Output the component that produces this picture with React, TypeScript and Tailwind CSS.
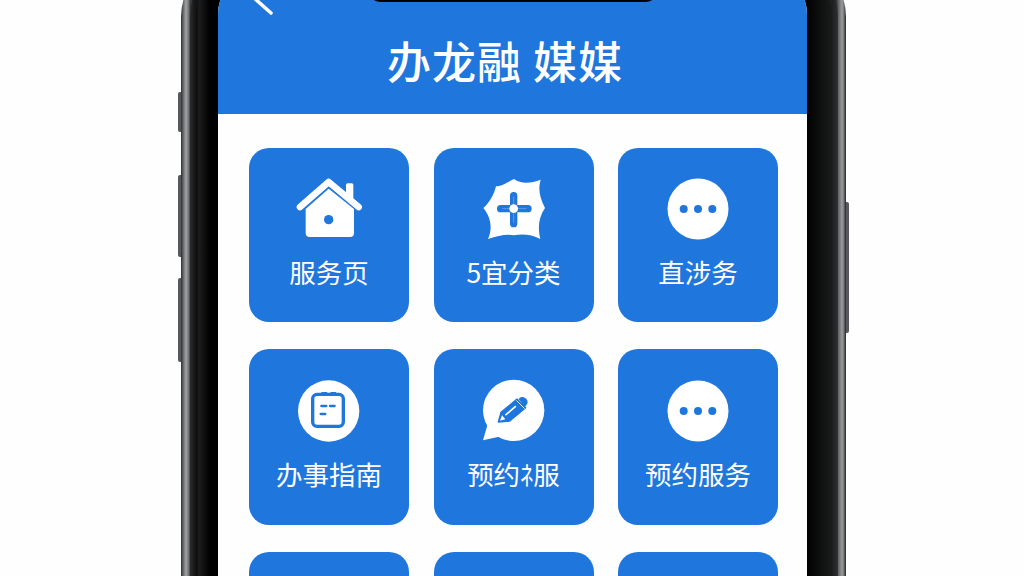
import React from "react";

const Dots = () => (
  <svg width="62" height="62" viewBox="0 0 62 62">
    <circle cx="31" cy="31" r="30.5" fill="#fff" />
    <circle cx="16.7" cy="31" r="4" fill="#1f76dc" />
    <circle cx="31" cy="31" r="4" fill="#1f76dc" />
    <circle cx="45.3" cy="31" r="4" fill="#1f76dc" />
  </svg>
);

const House = () => (
  <svg width="68" height="62" viewBox="165 115 204 186">
    <path d="M180 202L266 127L356 202" fill="none" stroke="#fff" strokeWidth="20" strokeLinecap="round" strokeLinejoin="round" />
    <path d="M318 160V136a5 5 0 0 1 5-5h12a5 5 0 0 1 5 5v50z" fill="#fff" />
    <path d="M197 208L266 147L342 208V280a12 12 0 0 1-12 12H209a12 12 0 0 1-12-12z" fill="#fff" />
    <circle cx="266" cy="240" r="14" fill="#1f76dc" />
  </svg>
);

const Blob = () => (
  <svg width="68" height="62" viewBox="720 115 204 186">
    <path d="M768 140C790 140 805 125 822 118C845 135 875 130 902 120C893 150 900 175 915 205C895 235 893 265 901 298C875 285 850 282 822 287C800 282 775 288 744 298C757 270 755 235 730 205C748 190 762 165 768 140Z" fill="#fff" />
    <path d="M821 168V252M782 207H864" stroke="#1f76dc" strokeWidth="22" strokeLinecap="round" />
    <path d="M821 172V248M788 207H858" stroke="#5d9ce6" strokeWidth="3" strokeLinecap="round" />
    <circle cx="821" cy="207" r="13" fill="#fff" />
  </svg>
);

const Calendar = () => (
  <svg width="62" height="62" viewBox="28 27 186 186">
    <circle cx="120" cy="120" r="92" fill="#fff" />
    <rect x="72" y="70" width="92" height="96" rx="13" fill="none" stroke="#1f76dc" strokeWidth="10" />
    <path d="M100 65H114M127 65H141" stroke="#1f76dc" strokeWidth="4" strokeLinecap="round" />
    <path d="M98 105H113M124 105H138M96 129H110" stroke="#1f76dc" strokeWidth="7" strokeLinecap="round" />
  </svg>
);

const Pencil = () => (
  <svg width="62" height="64" viewBox="28 24 186 192">
    <circle cx="120" cy="118" r="92" fill="#fff" />
    <path d="M42 160L28 208L86 195z" fill="#fff" />
    <path d="M74 153L82 124L130 84L156 110L108 150z" fill="#1f76dc" stroke="#1f76dc" strokeWidth="4" strokeLinejoin="round" />
    <path d="M135 84a13 13 0 0 1 18 -4a14 14 0 0 1 7 20l-7 8z" fill="#1f76dc" />
    <path d="M128 88L153 113" stroke="#fff" strokeWidth="2.5" />
    <path d="M97 131L125 107" stroke="#fff" strokeWidth="5" strokeLinecap="round" />
    <path d="M79 149L85 133L95 145z" fill="#fff" />
  </svg>
);

const cards = [
  { label: "服务页", icon: <House />, pad: "pt-[30px]" },
  { label: "5宜分类", icon: <Blob />, pad: "pt-[30px]" },
  { label: "直涉务", icon: <Dots />, pad: "pt-[30px]" },
  { label: "办事指南", icon: <Calendar />, pad: "pt-[31px]" },
  { label: "预约ﾈ服", icon: <Pencil />, pad: "pt-[31px]" },
  { label: "预约服务", icon: <Dots />, pad: "pt-[31px]" },
  { label: "", icon: null, pad: "pt-[30px]" },
  { label: "", icon: null, pad: "pt-[30px]" },
  { label: "", icon: null, pad: "pt-[30px]" },
];

export default function App() {
  return (
    <div className="relative h-[576px] w-[1024px] overflow-hidden bg-[#fefefe] font-['Noto_Sans_CJK_SC','Noto_Sans',sans-serif]">
      {/* side buttons */}
      <div className="absolute left-[178px] top-[92px] h-[40px] w-[4px] rounded-l-[2px] bg-[#55585c]" />
      <div className="absolute left-[178px] top-[175px] h-[82px] w-[4px] rounded-l-[2px] bg-[#55585c]" />
      <div className="absolute left-[178px] top-[278px] h-[84px] w-[4px] rounded-l-[2px] bg-[#55585c]" />
      <div className="absolute left-[845px] top-[202px] h-[131px] w-[4px] rounded-r-[2px] bg-[#55585c]" />

      <div className="relative ml-[181px] mt-[-45px] h-[700px] w-[665px] rounded-t-[62px] bg-[linear-gradient(90deg,#2c2e30_0px,#5f6163_2px,#a2a3a4_5px,#6a6b6c_8px,#3a3b3c_9px,#3a3b3c_656px,#5a5c5e_657px,#9a9c9e_661px,#707274_663px,#1e2022_665px)] pt-[5px] pl-[9px] pr-[8px]">
        <div className="h-full rounded-t-[56px] bg-[linear-gradient(90deg,#2a2c2e,#141516_5px,#1d1e20_642px,#303133_648px)] pl-[6px] pr-[6px] pt-[5px]">
          <div className="h-full rounded-t-[50px] bg-[linear-gradient(90deg,#0a0a0a,#1c1c1c_3px,#000_14px,#000_610px,#1a1b1c_636px)] pl-[22px] pr-[25px] pt-[5px]">
            <div className="h-full overflow-hidden rounded-t-[44px] bg-[#fefefe]">
              <header className="relative flex h-[144px] items-center justify-center bg-[#1f76dc] pr-[15px] pt-[36px] text-[44px] font-medium leading-none tracking-[1px] text-white">
                <span className="whitespace-pre">办龙融 媒媒</span>
                <div className="absolute left-[149px] top-0 h-[32px] w-[292px] rounded-b-[14px] bg-black" />
                <svg className="absolute left-[28px] top-0" width="30" height="48" viewBox="0 0 30 48">
                  <path d="M7 27L25 43" fill="none" stroke="#fff" strokeWidth="3.5" strokeLinecap="round" />
                </svg>
              </header>
              <div className="grid grid-cols-[160px_160px_160px] grid-rows-[174px_176px_176px] gap-x-[24.5px] gap-y-[27px] pl-[31px] pt-[34px]">
                {cards.map((c, i) => (
                  <div key={i} className={`flex flex-col items-center rounded-[20px] bg-[#1f76dc] ${c.pad}`}>
                    <div className="flex h-[62px] items-center justify-center">{c.icon}</div>
                    <div className="mt-[14px] whitespace-nowrap text-[26.5px] leading-[36px] text-white">{c.label}</div>
                  </div>
                ))}
              </div>
            </div>
          </div>
        </div>
      </div>
    </div>
  );
}
